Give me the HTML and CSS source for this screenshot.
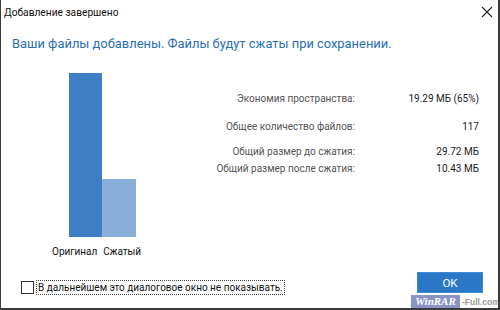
FILE: index.html
```html
<!DOCTYPE html>
<html>
<head>
<meta charset="utf-8">
<link rel="stylesheet" href="styles.css">
</head>
<body>
<div class="window">
  <div class="titlebar">
    <span class="title">Добавление завершено</span>
    <svg class="close" width="12" height="12" viewBox="0 0 12 12"><path d="M1 1 L11 11 M11 1 L1 11" stroke="#222" stroke-width="1.1" fill="none"/></svg>
  </div>
  <div class="heading">Ваши файлы добавлены. Файлы будут сжаты при сохранении.</div>
  <div class="content">
    <div class="chart">
      <div class="bars">
        <div class="bar bar-orig"></div>
        <div class="bar bar-comp"></div>
      </div>
      <div class="labels"><span>Оригинал</span><span>Сжатый</span></div>
    </div>
    <div class="stats">
      <div class="row r1"><span class="lbl">Экономия пространства:</span><span class="val">19.29 МБ (65%)</span></div>
      <div class="row r2"><span class="lbl">Общее количество файлов:</span><span class="val">117</span></div>
      <div class="row r3"><span class="lbl">Общий размер до сжатия:</span><span class="val">29.72 МБ</span></div>
      <div class="row r4"><span class="lbl">Общий размер после сжатия:</span><span class="val">10.43 МБ</span></div>
    </div>
  </div>
  <div class="footer">
    <label class="check"><span class="box"></span><span class="check-text">В дальнейшем это диалоговое окно не показывать.</span></label>
    <button class="ok">OK</button>
  </div>
  <div class="watermark"><span class="wm-win">WinRAR</span><span class="wm-full">-Full.com</span></div>
</div>
</body>
</html>
```
FILE: styles.css
```css
* { box-sizing: border-box; }
html, body { margin: 0; padding: 0; background: #fff; }
body { font-family: Roboto, "Noto Sans", sans-serif; }
.window {
  position: relative;
  width: 500px;
  height: 310px;
  border-left: 1px solid #3a3a3a;
  border-right: 2px solid #3a3a3a;
  border-bottom: 2px solid #3a3a3a;
  display: flex;
  flex-direction: column;
  overflow: hidden;
}
.titlebar {
  height: 24px;
  display: flex;
  justify-content: space-between;
  align-items: center;
  padding: 0 5px 0 3px;
  font-size: 10.2px;
  color: #111;
}
.heading {
  margin-top: 10px;
  padding-left: 11px;
  font-size: 12.9px;
  color: #2a6eb3;
  line-height: 20px;
  white-space: nowrap;
}
.content {
  display: flex;
  margin-top: 19px;
}
.chart {
  padding-left: 51px;
  width: 200px;
  flex: none;
}
.bars {
  display: flex;
  align-items: flex-end;
  height: 164px;
  padding-left: 17px;
}
.bar-orig { width: 33px; height: 164px; background: #3d7ec5; }
.bar-comp { width: 34px; height: 58px; background: #8aafdb; }
.labels {
  display: flex;
  gap: 6px;
  font-size: 10px;
  color: #111;
  margin-top: 7px;
  line-height: 16px;
  white-space: nowrap;
}
.stats {
  display: grid;
  grid-template-columns: 154px 124px;
  align-content: start;
  margin-top: 18px;
}
.row { display: contents; }
.lbl, .val { font-size: 10px; line-height: 16px; text-align: right; white-space: nowrap; }
.lbl { color: #555; }
.val { color: #1a1a1a; }
.r2 .lbl, .r2 .val { margin-top: 12px; }
.r3 .lbl, .r3 .val { margin-top: 9px; }
.r4 .lbl, .r4 .val { margin-top: 1px; }
.footer {
  display: flex;
  justify-content: space-between;
  align-items: center;
  margin-top: 10px;
  padding: 0 15px 0 20px;
}
.check { display: flex; align-items: center; gap: 2px; margin-top: 10px; }
.box { width: 13px; height: 13px; border: 1px solid #333; background: #fff; }
.check-text {
  font-size: 10px;
  color: #111;
  border: 1px dotted #444;
  padding: 0 1px;
  line-height: 13px;
  white-space: nowrap;
}
.ok {
  width: 66px;
  height: 21px;
  background: #2a78c6;
  border: 1px solid #3f8ad6;
  color: #fff;
  font-family: inherit;
  font-size: 11.5px;
  padding: 0;
}
.watermark {
  position: absolute;
  left: 410px;
  top: 295px;
  display: flex;
  align-items: center;
  height: 13px;
  white-space: nowrap;
}
.wm-win {
  width: 49px;
  text-align: center;
  background: #8a93c2;
  color: #fff;
  font-family: "Liberation Serif", serif;
  font-style: italic;
  font-weight: bold;
  font-size: 11px;
  line-height: 13px;
}
.wm-full {
  color: #999;
  font-family: "Liberation Sans", sans-serif;
  font-weight: bold;
  font-size: 8.5px;
  margin-left: 2px;
}
```
